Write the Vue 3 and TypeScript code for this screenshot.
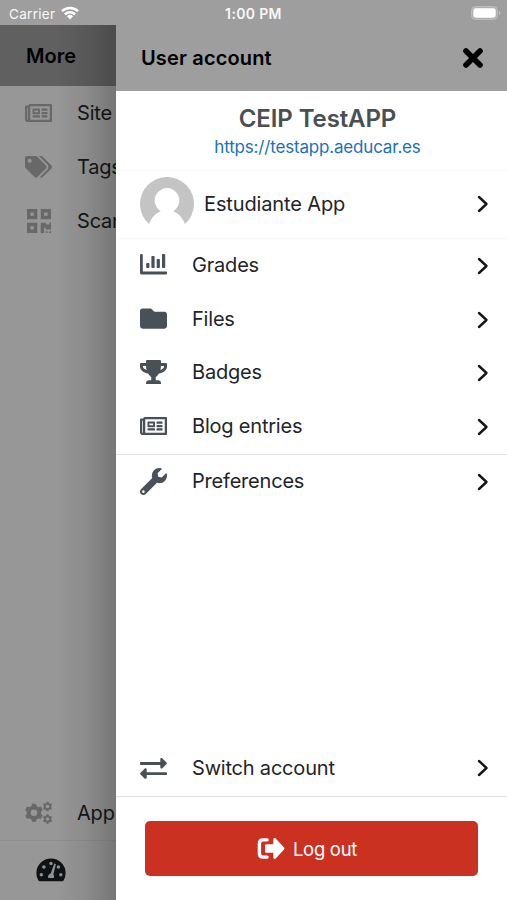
<script setup lang="ts">
interface Icon {
  box: string
  d: string
}

interface Entry {
  label: string
  icon: Icon
  cls: string
}

function gear(cx: number, cy: number, r: number, hole: number, teeth: number): string {
  const pts: string[] = []
  const step = (Math.PI * 2) / teeth
  for (let i = 0; i < teeth; i++) {
    const a = i * step - Math.PI / 2
    const corners: [number, number][] = [
      [-0.32, 0.78],
      [-0.2, 1],
      [0.2, 1],
      [0.32, 0.78],
    ]
    for (const [t, k] of corners) {
      const x = cx + Math.cos(a + t * step) * r * k
      const y = cy + Math.sin(a + t * step) * r * k
      pts.push(`${x.toFixed(1)} ${y.toFixed(1)}`)
    }
  }
  return `M${pts.join('L')}ZM${cx - hole} ${cy}a${hole} ${hole} 0 1 0 ${hole * 2} 0a${hole} ${hole} 0 1 0 ${-hole * 2} 0Z`
}

const newspaper: Icon = {
  box: '0 0 576 512',
  d: 'M552 64H112c-20.858 0-38.643 13.377-45.248 32H24c-13.255 0-24 10.745-24 24v272c0 30.928 25.072 56 56 56h496c13.255 0 24-10.745 24-24V88c0-13.255-10.745-24-24-24zM48 392V144h16v248c0 4.411-3.589 8-8 8s-8-3.589-8-8zm480 8H111.422c.374-2.614.578-5.283.578-8V112h416v288zM172 280h136c6.627 0 12-5.373 12-12v-96c0-6.627-5.373-12-12-12H172c-6.627 0-12 5.373-12 12v96c0 6.627 5.373 12 12 12zm28-80h80v40h-80v-40zm-40 140v-24c0-6.627 5.373-12 12-12h136c6.627 0 12 5.373 12 12v24c0 6.627-5.373 12-12 12H172c-6.627 0-12-5.373-12-12zm192 0v-24c0-6.627 5.373-12 12-12h104c6.627 0 12 5.373 12 12v24c0 6.627-5.373 12-12 12H364c-6.627 0-12-5.373-12-12zm0-144v-24c0-6.627 5.373-12 12-12h104c6.627 0 12 5.373 12 12v24c0 6.627-5.373 12-12 12H364c-6.627 0-12-5.373-12-12zm0 72v-24c0-6.627 5.373-12 12-12h104c6.627 0 12 5.373 12 12v24c0 6.627-5.373 12-12 12H364c-6.627 0-12-5.373-12-12z',
}
const tags: Icon = {
  box: '0 0 640 512',
  d: 'M497.941 225.941L286.059 14.059A48 48 0 0 0 252.118 0H48C21.49 0 0 21.49 0 48v204.118a48 48 0 0 0 14.059 33.941l211.882 211.882c18.744 18.745 49.136 18.746 67.882 0l204.118-204.118c18.745-18.745 18.745-49.137 0-67.882zM112 160c-26.51 0-48-21.49-48-48s21.49-48 48-48 48 21.49 48 48-21.49 48-48 48zm513.941 133.823L421.823 497.941c-18.745 18.745-49.137 18.745-67.882 0l-.36-.36L527.64 323.522c16.999-16.999 26.36-39.6 26.36-63.64s-9.362-46.641-26.36-63.64L331.397 0h48.721a48 48 0 0 1 33.941 14.059l211.882 211.882c18.745 18.745 18.745 49.137 0 67.882z',
}
const qrcode: Icon = {
  box: '0 32 448 448',
  d: 'M0 224h192V32H0v192zM64 96h64v64H64V96zm192-64v192h192V32H256zm128 128h-64V96h64v64zM0 480h192V288H0v192zm64-128h64v64H64v-64zm352-64h32v128h-96v-32h-32v96h-64V288h96v32h64v-32zm0 160h32v32h-32v-32zm-64 0h32v32h-32v-32z',
}
const cogs: Icon = {
  box: '0 0 640 512',
  d: gear(212, 256, 220, 78, 6) + gear(534, 108, 114, 42, 6) + gear(534, 404, 114, 42, 6),
}
const chart: Icon = {
  box: '0 0 27 21',
  d: 'M1.2 0h.5Q2.8 0 2.8 1.2V17.6H26.2Q27 17.6 27 18.4V19.6Q27 20.6 26 20.6H1.6Q0 20.6 0 19V1.2Q0 0 1.2 0ZM7 9h1.6q.8 0 .8.8v3.4q0 .8-.8.8H7q-.8 0-.8-.8V9.8Q6.2 9 7 9ZM12.2 1.9h1.6q.8 0 .8.8V13.2q0 .8-.8.8h-1.6q-.8 0-.8-.8V2.7q0-.8.8-.8ZM17.5 5h1.6q.8 0 .8.8v7.4q0 .8-.8.8h-1.6q-.8 0-.8-.8V5.8q0-.8.8-.8ZM22.8 0h1.6q.8 0 .8.8v12.4q0 .8-.8.8h-1.6q-.8 0-.8-.8V.8q0-.8.8-.8Z',
}
const folder: Icon = {
  box: '0 0 512 512',
  d: 'M464 128H272l-64-64H48C21.49 64 0 85.49 0 112v288c0 26.51 21.49 48 48 48h416c26.51 0 48-21.49 48-48V176c0-26.51-21.49-48-48-48z',
}
const trophy: Icon = {
  box: '0 0 576 512',
  d: 'M552 64H448V24c0-13.3-10.7-24-24-24H152c-13.3 0-24 10.7-24 24v40H24C10.7 64 0 74.7 0 88v56c0 35.7 22.5 72.4 61.9 100.7 31.5 22.7 69.8 37.1 110 41.7C203.3 338.5 240 360 240 360v72h-48c-35.3 0-64 20.7-64 56v12c0 6.6 5.4 12 12 12h296c6.6 0 12-5.4 12-12v-12c0-35.3-28.7-56-64-56h-48v-72s36.7-21.5 68.1-73.6c40.3-4.6 78.6-19 110-41.7 39.3-28.3 61.9-65 61.9-100.7V88c0-13.3-10.7-24-24-24zM99.3 192.8C74.9 175.2 64 155.6 64 144v-16h64.2c1 32.6 5.8 61.2 12.8 86.2-15.1-5.2-29.2-12.4-41.7-21.4zM512 144c0 16.1-17.7 36.1-35.3 48.8-12.5 9-26.7 16.2-41.8 21.4 7-25 11.8-53.6 12.8-86.2H512v16z',
}
const wrench: Icon = {
  box: '0 0 512 512',
  d: 'M507.73 109.1c-2.24-9.03-13.54-12.09-20.12-5.51l-74.36 74.36-67.88-11.31-11.31-67.88 74.36-74.36c6.62-6.62 3.43-17.9-5.66-20.16-47.38-11.74-99.55.91-136.58 37.93-39.64 39.64-50.55 97.1-34.05 147.2L18.74 402.76c-24.99 24.99-24.99 65.51 0 90.5 24.99 24.99 65.51 24.99 90.5 0l213.21-213.21c50.12 16.71 107.47 5.68 147.37-34.22 37.07-37.07 49.7-89.32 37.91-136.73zM64 472c-13.25 0-24-10.75-24-24 0-13.26 10.75-24 24-24s24 10.74 24 24c0 13.25-10.75 24-24 24z',
}
const exchange: Icon = {
  box: '0 0 27 21',
  d: 'M.8 4H20.3V1.3C20.3.1 21.6-.4 22.4.4L26.5 4.5Q27.2 5.3 26.5 6.1L22.4 10.2C21.6 11 20.3 10.4 20.3 9.3V6.9H.8Q0 6.9 0 6.1V4.8Q0 4 .8 4ZM26.2 14.2H6.7V11.6C6.7 10.4 5.4 9.9 4.6 10.7L.5 14.8Q-.2 15.6.5 16.4L4.6 20.5C5.4 21.3 6.7 20.7 6.7 19.6V17.1H26.2Q27 17.1 27 16.3V15Q27 14.2 26.2 14.2Z',
}

const siteEntries: Entry[] = [
  { label: 'Site', icon: newspaper, cls: 'news' },
  { label: 'Tags', icon: tags, cls: 'tags' },
  { label: 'Scan', icon: qrcode, cls: 'qr' },
]

const accountEntries: Entry[] = [
  { label: 'Grades', icon: chart, cls: 'grades' },
  { label: 'Files', icon: folder, cls: 'files' },
  { label: 'Badges', icon: trophy, cls: 'badges' },
  { label: 'Blog entries', icon: newspaper, cls: 'blog' },
]
const preferences: Entry = { label: 'Preferences', icon: wrench, cls: 'prefs' }
const switchAccount: Entry = { label: 'Switch account', icon: exchange, cls: 'switch' }
</script>

<template>
  <div class="screen">
    <div class="status">
      <div class="carrier">
        <span>Carrier</span>
        <svg class="wifi" viewBox="0 0 18 14">
          <g fill="none" stroke="#fff" stroke-width="2.5">
            <path d="M1 5.2A11.5 11.5 0 0 1 17 5.2" />
            <path d="M3.9 8.3A7.3 7.3 0 0 1 14.1 8.3" />
          </g>
          <path d="M5.9 10.2A4.5 4.5 0 0 1 12.1 10.2L9 13.5Z" fill="#fff" />
        </svg>
      </div>
      <span class="clock">1:00 PM</span>
      <svg class="battery" viewBox="0 0 30 14">
        <rect x=".5" y=".5" width="26" height="13" rx="4" fill="#b0b0b0" stroke="#bdbdbd" />
        <rect x="2.3" y="2.3" width="22.4" height="9.4" rx="2.4" fill="#fff" />
        <path d="M28 4.8Q30.5 7 28 9.2Z" fill="#c4c4c4" />
      </svg>
    </div>

    <div class="panes">
      <div class="page">
        <header class="page-head">More</header>
        <div v-for="e in siteEntries" :key="e.label" class="page-row">
          <span class="slot"><svg :class="e.cls" :viewBox="e.icon.box"><path :d="e.icon.d" fill-rule="evenodd" /></svg></span>
          <span class="page-label">{{ e.label }}</span>
        </div>
        <div class="page-row last">
          <span class="slot"><svg class="cogs" :viewBox="cogs.box"><path :d="cogs.d" fill-rule="evenodd" /></svg></span>
          <span class="page-label">App</span>
        </div>
        <nav class="tabs">
          <svg class="gauge" viewBox="0 0 30 24">
            <path d="M15 .5A14.6 14.6 0 0 0 .4 15.2Q.4 19.4 2.4 22.5Q2.9 23.3 3.8 23.3H26.2Q27.1 23.3 27.6 22.5Q29.6 19.4 29.6 15.2A14.6 14.6 0 0 0 15 .5Z" fill="#0f1214" />
            <g fill="#929292">
              <circle cx="5.3" cy="16.7" r="1.7" />
              <circle cx="7.9" cy="9" r="1.8" />
              <circle cx="15" cy="5.5" r="1.7" />
              <circle cx="22.4" cy="9" r="1.7" />
              <circle cx="24.8" cy="16.7" r="1.7" />
              <path d="M18.3 5.5L19.9 6L17.4 16.2Q18.7 18 17.8 20H12.2Q11.3 16.6 14.7 15.5Z" />
            </g>
          </svg>
        </nav>
        <div class="shade"></div>
      </div>

      <aside class="drawer">
        <header class="drawer-head">
          <h1>User account</h1>
          <svg class="close" viewBox="0 0 22 22"><path d="M4 4L18 18M18 4L4 18" /></svg>
        </header>
        <section class="site">
          <h2>CEIP TestAPP</h2>
          <a>https://testapp.aeducar.es</a>
        </section>
        <div class="user">
          <svg class="avatar" viewBox="0 0 54 54">
            <path d="M9 47.1A27 27 0 1 1 45 47.1Q42 38.5 33.2 34A12.3 12.3 0 1 0 20.8 34Q12 38.5 9 47.1Z" fill="#c4c4c4" />
          </svg>
          <span class="user-name">Estudiante App</span>
          <svg class="chev" viewBox="0 0 12 18"><path d="M2 2L9.5 9L2 16" /></svg>
        </div>
        <div v-for="e in accountEntries" :key="e.label" class="row">
          <span class="slot"><svg :class="e.cls" :viewBox="e.icon.box"><path :d="e.icon.d" fill-rule="evenodd" /></svg></span>
          <span class="label">{{ e.label }}</span>
          <svg class="chev" viewBox="0 0 12 18"><path d="M2 2L9.5 9L2 16" /></svg>
        </div>
        <div class="row after-line">
          <span class="slot"><svg :viewBox="preferences.icon.box"><path :d="preferences.icon.d" fill-rule="evenodd" /></svg></span>
          <span class="label">{{ preferences.label }}</span>
          <svg class="chev" viewBox="0 0 12 18"><path d="M2 2L9.5 9L2 16" /></svg>
        </div>
        <div class="row bottom">
          <span class="slot"><svg :viewBox="switchAccount.icon.box"><path :d="switchAccount.icon.d" fill-rule="evenodd" /></svg></span>
          <span class="label">{{ switchAccount.label }}</span>
          <svg class="chev" viewBox="0 0 12 18"><path d="M2 2L9.5 9L2 16" /></svg>
        </div>
        <footer class="foot">
          <button class="logout" type="button">
            <svg class="exit" viewBox="0 0 27 21">
              <path d="M9.6 1.9H5.5Q1.9 1.9 1.9 5.5V15.5Q1.9 19.1 5.5 19.1H9.6" fill="none" stroke="#fff" stroke-width="3.4" stroke-linecap="round" />
              <path d="M8.8 6.3H15.8V1.5C15.8.1 17.3-.4 18.2.5L26.3 9.3Q27.4 10.5 26.3 11.7L18.2 20.5C17.3 21.4 15.8 20.9 15.8 19.5V14.7H8.8Q7.5 14.7 7.5 13.4V7.6Q7.5 6.3 8.8 6.3Z" fill="#fff" />
            </svg>
            <span>Log out</span>
          </button>
        </footer>
      </aside>
    </div>
  </div>
</template>

<style>
body {
  margin: 0;
}
</style>

<style scoped>
.screen {
  width: 507px;
  height: 900px;
  overflow: hidden;
  display: flex;
  flex-direction: column;
  font-family: Inter, 'Liberation Sans', sans-serif;
  color: #212529;
  background: #9e9e9e;
}
.status {
  height: 25px;
  flex: none;
  display: grid;
  grid-template-columns: 1fr auto 1fr;
  align-items: center;
  padding: 2px 6px 0 9px;
  box-sizing: border-box;
  color: #f8f8f8;
  font-size: 13px;
  line-height: 16px;
}
.carrier {
  display: flex;
  align-items: center;
  gap: 6px;
  font-size: 13.5px;
  letter-spacing: 0.3px;
}
.wifi {
  width: 18px;
  height: 14px;
  margin-top: -2px;
}
.clock {
  font-weight: 600;
  font-size: 14px;
  letter-spacing: 0.35px;
  margin-right: 3px;
}
.battery {
  width: 30px;
  height: 14px;
  margin-top: -1px;
  justify-self: end;
}
.panes {
  flex: 1;
  min-height: 0;
  display: flex;
}
.page {
  position: relative;
  width: 116px;
  flex: none;
  overflow: hidden;
  display: flex;
  flex-direction: column;
  background: #979797;
}
.page-head {
  height: 61px;
  flex: none;
  box-sizing: border-box;
  padding-left: 26px;
  line-height: 62px;
  background: #606060;
  color: #000;
  font-size: 20px;
  font-weight: 600;
}
.page-row {
  height: 54px;
  flex: none;
  display: flex;
  align-items: center;
  gap: 25px;
  padding-left: 25px;
  white-space: nowrap;
}
.page-row svg {
  fill: #686868;
}
.page-label {
  font-size: 20px;
  letter-spacing: -0.2px;
  margin-top: -1px;
  color: #141618;
}
.last {
  margin-top: auto;
}
.tabs {
  height: 60px;
  flex: none;
  box-sizing: border-box;
  border-top: 1px solid #8f8f8f;
  display: flex;
  align-items: center;
  padding: 0 0 1px 36px;
}
.gauge {
  width: 30px;
  height: 24px;
}
.shade {
  position: absolute;
  inset: 0 0 0 auto;
  width: 60px;
  background: linear-gradient(to right, rgba(0, 0, 0, 0), rgba(0, 0, 0, 0.08) 50%, rgba(0, 0, 0, 0.22));
}
.slot {
  width: 27px;
  flex: none;
  display: flex;
  justify-content: center;
}
.slot svg {
  width: 27px;
  display: block;
  overflow: visible;
}
.slot svg.qr {
  width: 24px;
}
.drawer {
  flex: 1;
  display: flex;
  flex-direction: column;
  background: #fff;
}
.drawer-head {
  height: 66px;
  flex: none;
  box-sizing: border-box;
  padding: 0 23px 0 25px;
  display: flex;
  align-items: center;
  justify-content: space-between;
  background: #9e9e9e;
  color: #000;
}
h1 {
  margin: 0;
  font-size: 20px;
  font-weight: 600;
  letter-spacing: 0.15px;
}
.close {
  width: 22px;
  height: 22px;
  fill: none;
  stroke: #000;
  stroke-width: 5.6;
  stroke-linecap: round;
}
.site {
  height: 80px;
  flex: none;
  box-sizing: border-box;
  border-bottom: 1px solid #f8f8f8;
  padding: 13px 0 0 12px;
  text-align: center;
}
h2 {
  margin: 0;
  font-size: 24px;
  line-height: 30px;
  font-weight: 600;
  letter-spacing: -0.1px;
  color: #4a4f54;
}
.site a {
  display: block;
  font-size: 17px;
  line-height: 26px;
  letter-spacing: -0.18px;
  color: #1a70bd;
}
.user {
  height: 68px;
  flex: none;
  box-sizing: border-box;
  border-bottom: 1px solid #f8f8f8;
  display: flex;
  align-items: center;
  padding: 0 18px 2px 24px;
}
.avatar {
  width: 54px;
  height: 54px;
  margin-right: 10px;
}
.user-name,
.label {
  font-size: 20px;
  letter-spacing: -0.2px;
  white-space: nowrap;
}
.user-name {
  letter-spacing: -0.13px;
}
.label {
  padding-bottom: 2px;
}
.chev {
  width: 12px;
  height: 18px;
  margin-left: auto;
  fill: none;
  stroke: #15181a;
  stroke-width: 2.4;
  stroke-linecap: round;
  stroke-linejoin: round;
}
.row {
  height: 53.8px;
  flex: none;
  box-sizing: border-box;
  display: flex;
  align-items: center;
  padding: 0 18px 0 24px;
}
.row .slot {
  margin-right: 25px;
  padding-bottom: 2px;
}
.row .slot svg {
  fill: #495057;
}
.after-line {
  height: 55px;
  border-top: 1px solid #dee2e6;
}
.bottom {
  margin-top: auto;
  height: 56px;
  padding-bottom: 1px;
  border-bottom: 1px solid #dee2e6;
}
.bottom .label,
.bottom .slot {
  padding-bottom: 0;
}
.foot {
  height: 103px;
  flex: none;
  box-sizing: border-box;
  padding: 24px 29px 0;
}
.logout {
  width: 333px;
  height: 55px;
  border: 0;
  border-radius: 5px;
  background: #ca3120;
  color: #fff;
  display: flex;
  align-items: center;
  justify-content: center;
  gap: 8px;
  padding: 0 9px 0 0;
  font-family: inherit;
  font-size: 18.5px;
  letter-spacing: -0.3px;
}
.logout span {
  padding-top: 1px;
}
.exit {
  width: 28px;
  height: 21px;
  margin-top: -1px;
}
</style>
